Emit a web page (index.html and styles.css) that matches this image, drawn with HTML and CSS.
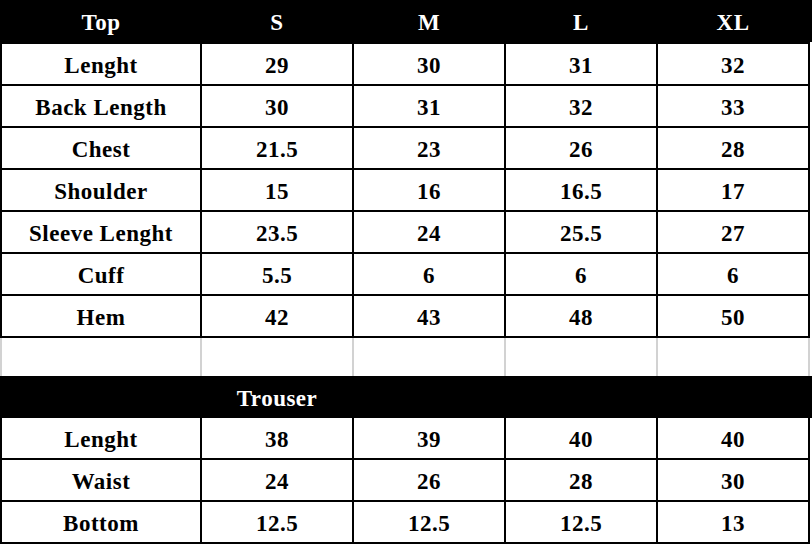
FILE: index.html
```html
<!DOCTYPE html>
<html>
<head>
<meta charset="utf-8">
<link rel="stylesheet" href="styles.css">
</head>
<body>
<div class="sheet">
  <div class="head">
    <div>Top</div><div>S</div><div>M</div><div>L</div><div>XL</div>
  </div>
  <div class="grid top">
    <div>Lenght</div><div>29</div><div>30</div><div>31</div><div>32</div>
    <div>Back Length</div><div>30</div><div>31</div><div>32</div><div>33</div>
    <div>Chest</div><div>21.5</div><div>23</div><div>26</div><div>28</div>
    <div>Shoulder</div><div>15</div><div>16</div><div>16.5</div><div>17</div>
    <div>Sleeve Lenght</div><div>23.5</div><div>24</div><div>25.5</div><div>27</div>
    <div>Cuff</div><div>5.5</div><div>6</div><div>6</div><div>6</div>
    <div>Hem</div><div>42</div><div>43</div><div>48</div><div>50</div>
  </div>
  <div class="grid empty">
    <div></div><div></div><div></div><div></div><div></div>
  </div>
  <div class="head">
    <div></div><div>Trouser</div><div></div><div></div><div></div>
  </div>
  <div class="grid bottom">
    <div>Lenght</div><div>38</div><div>39</div><div>40</div><div>40</div>
    <div>Waist</div><div>24</div><div>26</div><div>28</div><div>30</div>
    <div>Bottom</div><div>12.5</div><div>12.5</div><div>12.5</div><div>13</div>
  </div>
</div>
</body>
</html>
```

FILE: styles.css
```css
html, body {
  margin: 0;
  padding: 0;
  background: #ffffff;
}
.sheet {
  width: 812px;
  font-family: "Liberation Serif", "Times New Roman", serif;
  font-weight: bold;
  font-size: 23px;
  letter-spacing: 0.5px;
  color: #000;
}
.head {
  display: grid;
  grid-template-columns: 198px repeat(4, 150px);
  column-gap: 2px;
  padding: 0 2px;
  height: 42px;
  background: #000;
  color: #fff;
}
.head > div,
.grid > div {
  display: flex;
  align-items: center;
  justify-content: center;
  padding-top: 4px;
  box-sizing: border-box;
}
.grid {
  display: grid;
  width: 806px;
  grid-template-columns: 198px repeat(4, 150px);
  grid-auto-rows: 40px;
  gap: 2px;
  padding: 2px;
  background: #000;
}
.grid > div {
  background: #fff;
}
.grid.bottom {
  padding-top: 0;
}
.grid.empty {
  grid-auto-rows: 38px;
  padding: 0 2px;
  background: #d2d2d2;
}
```
